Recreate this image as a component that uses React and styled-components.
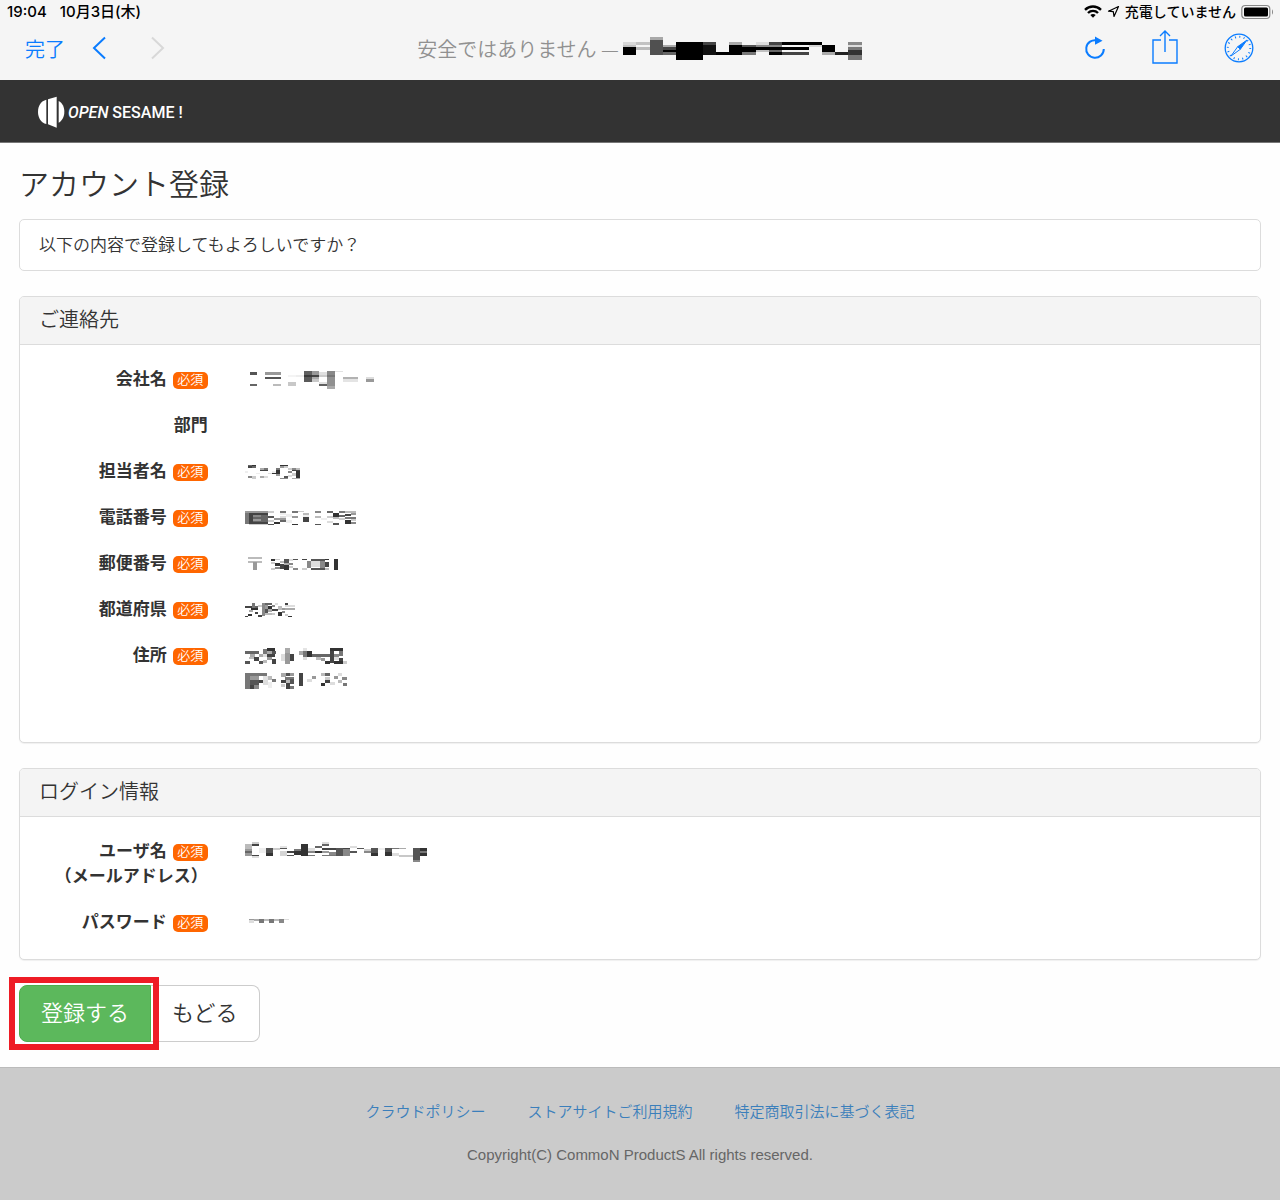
import styled, { createGlobalStyle, ThemeProvider } from 'styled-components';

const theme = {
  colors: {
    text: '#333',
    border: '#dcdcdc',
    panel: '#f4f4f4',
    ios: '#0a7cff',
    link: '#3b7fbb',
    required: '#ff6600',
    success: '#5cb85c',
    highlight: '#ee1c25',
  },
};

// each cell is [x, y, width, height, shade], three units to a pixel
const masks = {
  site: {
    box: [675, 42, 717, 69],
    cells: [
      [675, 57, 39, 9, '#d8d8d8'], [675, 66, 39, 6, '#c0c0c0'], [675, 72, 39, 24, '#000'],
      [714, 57, 42, 9, '#c2c2c2'], [714, 72, 42, 9, '#bbb'],
      [756, 42, 39, 9, '#a8a8a8'], [756, 51, 39, 45, '#505050'],
      [795, 66, 39, 6, '#aaa'], [795, 72, 39, 9, '#444'], [795, 81, 39, 6, '#000'], [795, 87, 39, 9, '#666'],
      [834, 57, 81, 54, '#000'],
      [915, 57, 38, 9, '#444'], [915, 66, 38, 30, '#111'],
      [953, 87, 79, 9, '#000'],
      [993, 57, 39, 9, '#aaa'], [993, 66, 39, 21, '#000'],
      [1032, 66, 42, 6, '#555'], [1032, 72, 42, 15, '#000'], [1032, 87, 42, 9, '#777'],
      [1074, 57, 39, 9, '#ddd'], [1074, 66, 39, 6, '#888'], [1074, 72, 39, 9, '#000'], [1074, 81, 39, 6, '#c0c0c0'],
      [1113, 57, 39, 9, '#444'], [1113, 66, 39, 6, '#888'], [1113, 72, 39, 9, '#000'], [1113, 81, 39, 6, '#666'], [1113, 87, 39, 9, '#000'],
      [1152, 57, 120, 9, '#000'], [1152, 72, 81, 9, '#000'], [1152, 87, 81, 9, '#444'],
      [1233, 66, 39, 6, '#d5d5d5'],
      [1272, 66, 39, 21, '#000'], [1272, 87, 39, 9, '#aaa'],
      [1311, 87, 39, 9, '#222'],
      [1350, 57, 42, 9, '#888'], [1350, 72, 42, 9, '#777'], [1350, 66, 42, 6, '#ddd'], [1350, 81, 42, 15, '#333'], [1350, 96, 42, 15, '#777'],
    ],
  },
  company: {
    box: [45, 33, 387, 54],
    cells: [
      [60, 36, 21, 9, '#555'], [60, 72, 21, 6, '#666'],
      [105, 36, 48, 9, '#999'], [105, 51, 48, 6, '#555'], [129, 72, 24, 6, '#bbb'],
      [174, 45, 24, 6, '#f4f4f4'], [198, 45, 24, 6, '#eee'], [174, 66, 24, 12, '#c8c8c8'],
      [222, 33, 24, 12, '#606060'], [222, 45, 24, 6, '#3a3a3a'], [222, 51, 24, 15, '#5a5a5a'],
      [246, 33, 21, 12, '#999'], [246, 45, 21, 6, '#444'], [246, 51, 21, 6, '#aaa'], [246, 57, 21, 9, '#c8c8c8'],
      [267, 36, 24, 9, '#e0e0e0'], [267, 45, 24, 6, '#ccc'], [267, 66, 24, 6, '#e2e2e2'], [267, 72, 24, 6, '#606060'],
      [291, 33, 24, 12, '#888'], [291, 45, 24, 6, '#777'], [291, 51, 24, 27, '#909090'], [291, 78, 24, 9, '#aaa'],
      [315, 33, 24, 3, '#e2e2e2'],
      [339, 51, 45, 6, '#b2b2b2'], [339, 57, 45, 9, '#e4e4e4'],
      [408, 51, 24, 6, '#ddd'], [408, 57, 24, 9, '#999'],
    ],
  },
  contact: {
    box: [45, 315, 165, 42],
    cells: [
      [54, 315, 24, 9, '#666'], [66, 315, 12, 3, '#333'], [54, 318, 12, 6, '#444'],
      [42, 333, 12, 6, '#eee'], [54, 348, 12, 6, '#888'], [66, 348, 12, 9, '#ccc'],
      [90, 324, 12, 6, '#aaa'], [102, 324, 12, 6, '#777'], [90, 330, 24, 3, '#444'],
      [78, 339, 12, 3, '#eee'], [90, 348, 12, 6, '#aaa'], [102, 348, 12, 6, '#ddd'],
      [114, 339, 12, 3, '#ddd'], [126, 333, 12, 6, '#eee'], [126, 339, 12, 3, '#333'],
      [138, 324, 12, 6, '#777'], [138, 330, 12, 12, '#333'], [138, 342, 12, 6, '#999'],
      [150, 315, 24, 3, '#333'], [150, 318, 12, 6, '#999'], [162, 318, 12, 6, '#ccc'],
      [150, 354, 24, 3, '#888'], [162, 348, 12, 6, '#555'],
      [174, 324, 12, 6, '#ccc'], [174, 333, 12, 6, '#888'], [174, 345, 12, 6, '#ddd'],
      [186, 324, 12, 6, '#888'], [186, 330, 24, 3, '#444'], [186, 339, 12, 9, '#ccc'],
      [198, 324, 12, 6, '#bbb'], [198, 333, 12, 21, '#333'], [186, 354, 24, 3, '#aaa'],
    ],
  },
  phone: {
    box: [45, 33, 333, 42],
    cells: [
      [45, 33, 69, 6, '#999'], [45, 39, 12, 33, '#777'], [57, 39, 12, 33, '#444'], [69, 39, 45, 6, '#444'],
      [69, 45, 24, 6, '#888'], [93, 45, 21, 6, '#666'], [69, 51, 45, 15, '#666'], [69, 57, 24, 6, '#999'], [69, 66, 45, 6, '#444'],
      [57, 72, 57, 3, '#ccc'],
      [114, 33, 18, 6, '#ccc'], [114, 48, 18, 6, '#555'], [132, 54, 36, 6, '#999'], [114, 60, 18, 6, '#ccc'], [132, 66, 18, 6, '#333'], [114, 72, 18, 3, '#555'],
      [150, 33, 18, 6, '#777'], [150, 39, 18, 6, '#eee'], [150, 48, 18, 6, '#ddd'], [150, 60, 18, 6, '#666'],
      [186, 33, 18, 6, '#777'], [204, 33, 18, 3, '#ccc'], [168, 42, 18, 9, '#eee'], [186, 48, 18, 6, '#999'], [168, 60, 18, 9, '#eee'], [186, 72, 18, 3, '#333'],
      [219, 39, 18, 6, '#bbb'], [219, 51, 18, 15, '#444'], [219, 45, 18, 6, '#eee'],
      [255, 33, 18, 6, '#888'], [255, 48, 18, 6, '#bbb'], [273, 54, 18, 6, '#eee'], [255, 72, 18, 3, '#555'],
      [291, 33, 18, 6, '#666'], [309, 39, 18, 12, '#333'], [291, 48, 18, 6, '#ccc'], [309, 51, 18, 6, '#bbb'], [291, 63, 18, 6, '#ddd'], [309, 69, 18, 6, '#555'],
      [327, 33, 18, 6, '#777'], [345, 33, 33, 6, '#bbb'], [327, 45, 18, 6, '#666'], [345, 42, 18, 6, '#444'], [363, 39, 15, 6, '#999'], [345, 51, 33, 6, '#777'],
      [345, 60, 18, 12, '#333'], [363, 57, 15, 6, '#ccc'], [327, 54, 18, 6, '#ccc'], [363, 66, 15, 6, '#888'],
    ],
  },
  postcode: {
    box: [45, 168, 279, 39],
    cells: [
      [54, 168, 42, 6, '#bbb'], [54, 180, 42, 6, '#bbb'], [69, 183, 12, 24, '#999'],
      [123, 174, 12, 6, '#333'], [135, 174, 15, 3, '#ccc'], [123, 183, 12, 6, '#ccc'], [135, 186, 15, 9, '#333'], [123, 201, 12, 6, '#ccc'], [135, 198, 15, 6, '#888'],
      [150, 180, 12, 6, '#bbb'], [150, 189, 12, 15, '#444'], [162, 174, 15, 12, '#555'], [162, 186, 15, 6, '#aaa'], [162, 192, 15, 15, '#333'],
      [177, 174, 12, 6, '#ddd'], [189, 174, 15, 3, '#555'], [177, 186, 12, 6, '#888'], [177, 195, 12, 6, '#ccc'], [189, 201, 15, 6, '#888'],
      [216, 174, 15, 3, '#444'], [216, 201, 15, 6, '#ccc'], [231, 180, 12, 21, '#888'],
      [243, 174, 42, 6, '#555'], [243, 180, 27, 18, '#ddd'], [243, 201, 42, 6, '#555'], [270, 180, 15, 21, '#888'], [285, 174, 12, 3, '#333'], [285, 183, 12, 15, '#444'], [285, 201, 12, 6, '#bbb'],
      [312, 174, 12, 33, '#333'],
    ],
  },
  prefecture: {
    box: [45, 312, 150, 42],
    cells: [
      [66, 312, 9, 15, '#777'], [45, 321, 21, 6, '#444'], [75, 321, 9, 6, '#666'], [84, 318, 12, 6, '#ccc'],
      [63, 327, 21, 6, '#333'], [57, 333, 12, 6, '#aaa'], [54, 345, 12, 6, '#333'], [45, 351, 9, 3, '#444'], [75, 339, 9, 6, '#444'], [84, 348, 12, 6, '#444'],
      [96, 312, 9, 39, '#888'], [105, 312, 21, 6, '#666'], [105, 318, 9, 12, '#999'], [114, 321, 12, 9, '#333'], [105, 330, 9, 12, '#555'], [114, 330, 12, 9, '#aaa'], [105, 342, 21, 6, '#bbb'],
      [126, 318, 9, 6, '#888'], [135, 312, 9, 6, '#ddd'], [126, 330, 18, 6, '#444'], [126, 342, 9, 6, '#ccc'],
      [144, 321, 12, 12, '#bbb'], [156, 327, 9, 6, '#999'], [144, 339, 12, 12, '#333'], [156, 336, 9, 6, '#888'],
      [165, 312, 9, 6, '#444'], [165, 318, 30, 6, '#ddd'], [165, 327, 30, 6, '#aaa'], [165, 345, 9, 6, '#ccc'], [174, 351, 12, 3, '#333'],
    ],
  },
  city: {
    box: [45, 444, 306, 48],
    cells: [
      [45, 453, 42, 9, '#666'], [60, 462, 15, 9, '#aaa'], [72, 471, 15, 12, '#444'], [57, 471, 15, 6, '#bbb'], [45, 483, 15, 9, '#555'], [87, 462, 12, 9, '#aaa'], [87, 483, 12, 9, '#555'],
      [99, 447, 12, 15, '#777'], [111, 444, 24, 9, '#333'], [111, 453, 15, 9, '#aaa'], [126, 453, 12, 9, '#555'], [99, 462, 12, 9, '#ddd'], [111, 462, 24, 9, '#444'], [111, 471, 15, 9, '#999'], [99, 480, 12, 9, '#bbb'], [126, 477, 12, 15, '#444'],
      [165, 444, 15, 15, '#aaa'], [153, 462, 12, 21, '#ddd'], [165, 459, 15, 33, '#999'], [180, 462, 12, 21, '#444'],
      [207, 453, 12, 12, '#aaa'], [219, 444, 12, 9, '#e4e4e4'], [219, 453, 12, 18, '#777'], [231, 453, 15, 18, '#333'], [219, 471, 12, 9, '#ddd'],
      [246, 462, 54, 9, '#666'], [258, 471, 15, 9, '#bbb'], [273, 474, 12, 9, '#999'], [285, 483, 15, 9, '#333'],
      [300, 444, 39, 9, '#333'], [300, 453, 12, 36, '#444'], [312, 462, 15, 9, '#888'], [327, 453, 12, 15, '#777'], [312, 471, 15, 9, '#ddd'], [327, 474, 12, 9, '#444'], [312, 483, 27, 9, '#333'], [339, 483, 12, 9, '#ccc'],
    ],
  },
  street: {
    box: [45, 519, 306, 48],
    cells: [
      [45, 519, 66, 9, '#777'], [45, 528, 15, 39, '#777'], [60, 528, 27, 12, '#999'], [60, 540, 27, 15, '#555'], [72, 555, 15, 12, '#888'], [60, 555, 12, 12, '#444'],
      [99, 528, 15, 12, '#e2e2e2'], [87, 540, 12, 9, '#444'], [114, 528, 12, 12, '#bbb'], [126, 537, 12, 9, '#777'], [99, 540, 15, 15, '#ddd'], [114, 546, 12, 18, '#eee'],
      [153, 519, 15, 12, '#aaa'], [168, 519, 12, 9, '#555'], [180, 519, 12, 9, '#999'], [165, 531, 27, 9, '#777'], [153, 540, 15, 9, '#444'], [168, 540, 12, 9, '#bbb'], [180, 537, 12, 15, '#555'], [153, 552, 12, 9, '#ccc'], [168, 549, 12, 18, '#444'], [180, 558, 12, 9, '#777'],
      [207, 519, 12, 39, '#444'], [231, 537, 15, 9, '#ddd'], [246, 528, 12, 9, '#999'],
      [273, 519, 12, 9, '#bbb'], [285, 519, 15, 9, '#666'], [285, 531, 15, 9, '#ccc'], [285, 540, 15, 9, '#444'], [273, 549, 12, 9, '#333'], [300, 546, 15, 9, '#ddd'],
      [324, 519, 12, 9, '#ddd'], [312, 528, 12, 9, '#999'], [336, 531, 15, 9, '#888'], [324, 540, 12, 9, '#bbb'], [339, 549, 12, 9, '#777'],
    ],
  },
  email: {
    box: [45, 36, 546, 60],
    cells: [
      [45, 42, 21, 15, '#bbb'], [66, 36, 21, 6, '#ccc'], [66, 42, 21, 6, '#444'], [45, 57, 21, 6, '#999'], [45, 63, 21, 6, '#666'], [45, 69, 21, 9, '#999'], [66, 75, 21, 3, '#444'], [66, 78, 21, 5, '#ddd'],
      [87, 54, 21, 15, '#eee'], [108, 54, 21, 15, '#555'], [108, 69, 21, 9, '#333'], [129, 54, 21, 6, '#ccc'],
      [150, 48, 21, 6, '#e4e4e4'], [150, 54, 21, 3, '#555'], [150, 63, 21, 15, '#d4d4d4'], [171, 63, 21, 6, '#444'], [171, 75, 21, 3, '#555'],
      [192, 57, 21, 6, '#777'], [192, 63, 21, 12, '#333'], [213, 42, 21, 36, '#333'],
      [234, 54, 21, 9, '#ddd'], [234, 63, 21, 6, '#888'], [255, 48, 21, 6, '#666'], [255, 63, 21, 6, '#333'], [234, 75, 21, 3, '#777'],
      [276, 36, 21, 6, '#ddd'], [276, 42, 21, 6, '#666'], [276, 54, 42, 6, '#444'], [276, 63, 21, 6, '#999'], [297, 66, 21, 9, '#888'], [276, 75, 42, 3, '#777'],
      [318, 54, 21, 24, '#555'], [339, 57, 21, 21, '#888'], [339, 54, 21, 3, '#444'], [360, 48, 21, 6, '#ddd'], [360, 63, 21, 6, '#555'],
      [381, 54, 21, 3, '#555'], [402, 57, 21, 6, '#ccc'], [402, 63, 21, 6, '#888'],
      [423, 54, 21, 15, '#555'], [423, 69, 21, 9, '#333'], [444, 54, 21, 6, '#eee'],
      [465, 54, 21, 12, '#555'], [465, 66, 21, 12, '#333'], [486, 54, 21, 3, '#777'], [486, 69, 21, 9, '#ddd'], [507, 54, 21, 3, '#aaa'], [507, 75, 42, 6, '#c8c8c8'],
      [549, 54, 21, 36, '#555'], [549, 90, 21, 6, '#888'], [570, 54, 21, 9, '#333'], [570, 63, 21, 6, '#777'], [570, 69, 21, 9, '#333'],
    ],
  },
  password: {
    box: [45, 258, 132, 30],
    cells: [
      [57, 261, 15, 3, '#999'], [57, 264, 15, 8, '#ddd'], [72, 261, 15, 6, '#aaa'], [87, 261, 15, 11, '#777'],
      [102, 261, 15, 6, '#bbb'], [117, 261, 15, 11, '#777'], [132, 261, 15, 6, '#bbb'], [147, 261, 15, 11, '#888'], [162, 261, 15, 4, '#ddd'],
    ],
  },
};

const contactRows = [
  { label: '会社名', required: true, lines: ['company'] },
  { label: '部門', lines: [''] },
  { label: '担当者名', required: true, lines: ['contact'] },
  { label: '電話番号', required: true, lines: ['phone'] },
  { label: '郵便番号', required: true, lines: ['postcode'] },
  { label: '都道府県', required: true, lines: ['prefecture'] },
  { label: '住所', required: true, lines: ['city', 'street', ''] },
];

const loginRows = [
  { label: 'ユーザ名', note: '（メールアドレス）', required: true, lines: ['email'] },
  { label: 'パスワード', required: true, lines: ['password'] },
];

function Mask({ name }) {
  const { box, cells } = masks[name];
  return (
    <MaskSvg
      width={Math.round(box[2] / 3)}
      height={Math.round(box[3] / 3)}
      viewBox={box.join(' ')}
      shapeRendering="crispEdges"
      aria-hidden="true"
    >
      {cells.map(([x, y, width, height, fill], i) => (
        <rect key={i} x={x} y={y} width={width} height={height} fill={fill} />
      ))}
    </MaskSvg>
  );
}

function Chevron({ flip }) {
  return (
    <svg width="14" height="24" viewBox="0 0 14 24" fill="none" stroke="currentColor" strokeWidth="2">
      <path d={flip ? 'M1 1.5 12 12 1 22.5' : 'M13 1.5 2 12 13 22.5'} />
    </svg>
  );
}

function StatusBar() {
  return (
    <StatusWrapper>
      <Clock>
        <span>19:04</span>
        <span>10月3日(木)</span>
      </Clock>
      <StatusGroup>
        <svg width="18" height="13" viewBox="0 0 18 13" fill="none" stroke="#000" strokeWidth="2.4">
          <path d="M1 4.8C5.5.4 12.5.4 17 4.8" />
          <path d="M4 8C6.8 5.2 11.2 5.2 14 8" />
          <path d="M9 12.8 6.3 10C7.8 8.6 10.2 8.6 11.7 10Z" fill="#000" stroke="none" />
        </svg>
        <svg width="13" height="13" viewBox="0 0 13 13" fill="none" stroke="#000" strokeWidth="1.2" strokeLinejoin="round">
          <path d="M11.5 1.5 1.5 6.2 6.3 6.7 7 11.5Z" />
        </svg>
        <span>充電していません</span>
        <svg width="33" height="16" viewBox="0 0 33 16">
          <rect x=".8" y="1.5" width="28" height="13" rx="3.5" fill="none" stroke="#888" strokeWidth="1.2" />
          <rect x="3" y="3.5" width="24" height="9" rx="1.5" />
          <path d="M31 5.5V10.5C32.3 10 32.3 6 31 5.5Z" fill="#888" />
        </svg>
      </StatusGroup>
    </StatusWrapper>
  );
}

function BrowserBar() {
  return (
    <BrowserWrapper>
      <NavGroup>
        <DoneButton type="button">完了</DoneButton>
        <IconButton type="button" aria-label="戻る">
          <Chevron />
        </IconButton>
        <IconButton type="button" aria-label="進む" disabled>
          <Chevron flip />
        </IconButton>
      </NavGroup>
      <PageAddress>
        安全ではありません —<Mask name="site" />
      </PageAddress>
      <ToolGroup>
        <IconButton type="button" aria-label="再読み込み">
          <svg width="22" height="24" viewBox="0 0 22 24" fill="none" stroke="currentColor" strokeWidth="2">
            <path d="M13 4.4A8.800 8.800 0 1 0 19.800 13" />
            <path d="M11 .5 18.5 4.700 11 8.800Z" fill="currentColor" stroke="none" />
          </svg>
        </IconButton>
        <IconButton type="button" aria-label="共有">
          <svg width="26" height="38" viewBox="0 0 26 38" fill="none" stroke="currentColor" strokeWidth="1.4">
            <path d="M9 11H1V34H25V11H17M13 23V2M8 7 13 2 18 7" />
          </svg>
        </IconButton>
        <IconButton type="button" aria-label="Safari">
          <svg width="30" height="30" viewBox="0 0 30 30" fill="none" stroke="currentColor">
            <circle cx="15" cy="15" r="13.8" strokeWidth="1.3" />
            <circle cx="15" cy="15" r="11.2" strokeWidth="2" strokeDasharray="1 3.398" />
            <path d="M23 7 16.3 16.3 13.7 13.7Z" fill="currentColor" />
            <path d="M7 23 13.7 13.7 16.3 16.3Z" fill="#f5f5f5" />
          </svg>
        </IconButton>
      </ToolGroup>
    </BrowserWrapper>
  );
}

function FormRow({ row }) {
  return (
    <RowWrapper>
      <RowLabel>
        <LabelLine>
          {row.label}
          {row.required ? <Badge>必須</Badge> : null}
        </LabelLine>
        {row.note ? <LabelLine>{row.note}</LabelLine> : null}
      </RowLabel>
      <RowValue>
        {row.lines.map((name, i) => (
          <ValueLine key={i}>{name ? <Mask name={name} /> : null}</ValueLine>
        ))}
      </RowValue>
    </RowWrapper>
  );
}

function Panel({ title, rows }) {
  return (
    <PanelWrapper>
      <PanelTitle>{title}</PanelTitle>
      <PanelBody>
        {rows.map((row) => (
          <FormRow key={row.label} row={row} />
        ))}
      </PanelBody>
    </PanelWrapper>
  );
}

function App() {
  return (
    <ThemeProvider theme={theme}>
      <GlobalStyle />
      <Chrome>
        <StatusBar />
        <BrowserBar />
      </Chrome>
      <SiteHeader>
        <Logo href="#">
          <svg width="27" height="32" viewBox="115 289 81 96" fill="#fff" aria-hidden="true">
            <path d="M140 300V373C124 369 115 354 115 336S124 304 140 300Z" />
            <path d="M145 299 171 291V384L145 374Z" />
            <path d="M177 304C188 310 194 322 194 336S188 363 177 369Z" />
          </svg>
          <span>
            <em>OPEN</em> SESAME !
          </span>
        </Logo>
      </SiteHeader>
      <Main>
        <Title>アカウント登録</Title>
        <Message>以下の内容で登録してもよろしいですか？</Message>
        <Panel title="ご連絡先" rows={contactRows} />
        <Panel title="ログイン情報" rows={loginRows} />
        <ButtonGroup>
          <SubmitButton type="submit">登録する</SubmitButton>
          <BackButton type="button">もどる</BackButton>
        </ButtonGroup>
      </Main>
      <Footer>
        <FooterLinks>
          <a href="#">クラウドポリシー</a>
          <a href="#">ストアサイトご利用規約</a>
          <a href="#">特定商取引法に基づく表記</a>
        </FooterLinks>
        <Copyright>Copyright(C) CommoN ProductS All rights reserved.</Copyright>
      </Footer>
    </ThemeProvider>
  );
}

export default App;

const GlobalStyle = createGlobalStyle`
  * {
    box-sizing: border-box;
  }
  body {
    background-color: #fefefe;
    color: ${({ theme }) => theme.colors.text};
    font-family: "Liberation Sans", "Noto Sans CJK JP", sans-serif;
    font-size: 17px;
    font-weight: 350;
    line-height: 25px;
    margin: 0;
  }
  #root {
    display: flex;
    flex-direction: column;
    min-height: 100vh;
  }
  button {
    font-family: inherit;
    font-weight: inherit;
  }
`;
const MaskSvg = styled.svg`
  display: block;
  flex: none;
`;
const Chrome = styled.div`
  background-color: #f5f5f5;
  padding-bottom: 7px;
`;
const StatusWrapper = styled.div`
  align-items: center;
  color: #000;
  display: flex;
  font-family: Inter, "Noto Sans CJK JP", sans-serif;
  font-size: 14px;
  font-weight: 500;
  height: 23px;
  justify-content: space-between;
  padding: 0 6px 0 7px;
`;
const StatusGroup = styled.div`
  align-items: center;
  display: flex;
  gap: 5px;
`;
const Clock = styled(StatusGroup)`
  font-size: 15px;
  gap: 13px;
`;
const BrowserWrapper = styled.nav`
  align-items: center;
  display: grid;
  grid-template-columns: 1fr auto 1fr;
  height: 50px;
  padding: 0 26px 0 25px;
`;
const NavGroup = styled.div`
  align-items: center;
  display: flex;
  gap: 45px;
`;
const ToolGroup = styled(NavGroup)`
  gap: 46px;
  justify-content: flex-end;
`;
const IconButton = styled.button`
  background: none;
  border: none;
  color: ${({ theme }) => theme.colors.ios};
  cursor: pointer;
  display: flex;
  padding: 0;

  &:disabled {
    color: #d8d8d8;
  }
`;
const DoneButton = styled(IconButton)`
  font-size: 20px;
  margin-right: -18px;
`;
const PageAddress = styled.div`
  align-items: center;
  color: #909090;
  display: flex;
  font-family: "Noto Sans CJK JP", sans-serif;
  font-size: 20px;
  gap: 4px;
`;
const SiteHeader = styled.header`
  background-color: #333;
  border-bottom: 1px solid #777;
  padding: 16px 38px 14px;
`;
const Logo = styled.a`
  align-items: center;
  color: #fff;
  display: inline-flex;
  font-family: Roboto, sans-serif;
  font-size: 16px;
  font-weight: 500;
  gap: 3px;
  height: 32px;
  text-decoration: none;
  vertical-align: top;
`;
const Main = styled.main`
  padding: 22px 19px 25px;
`;
const Title = styled.h1`
  font-size: 30px;
  font-weight: 350;
  line-height: 40px;
  margin: 0 0 14px;
`;
const Message = styled.p`
  background-color: #fff;
  border: 1px solid ${({ theme }) => theme.colors.border};
  border-radius: 5px;
  margin: 0 0 25px;
  padding: 13px 19px 12px;
`;
const PanelWrapper = styled.section`
  background-color: #fff;
  border: 1px solid ${({ theme }) => theme.colors.border};
  border-radius: 5px;
  box-shadow: 0 1px 1px rgba(0, 0, 0, 0.06);
  margin-bottom: 25px;
`;
const PanelTitle = styled.h2`
  background-color: ${({ theme }) => theme.colors.panel};
  border-bottom: 1px solid ${({ theme }) => theme.colors.border};
  border-radius: 4px 4px 0 0;
  font-size: 20px;
  font-weight: 350;
  line-height: 23px;
  margin: 0;
  padding: 12px 19px;
`;
const PanelBody = styled.dl`
  display: flex;
  flex-direction: column;
  gap: 21px;
  margin: 0;
  padding: 22px 0 24px;
`;
const RowWrapper = styled.div`
  display: grid;
  grid-template-columns: 1fr 5fr;
`;
const RowLabel = styled.dt`
  font-weight: 700;
  padding-right: 19px;
`;
const LabelLine = styled.div`
  align-items: center;
  display: flex;
  gap: 6px;
  justify-content: flex-end;
  white-space: nowrap;
`;
const Badge = styled.span`
  background-color: ${({ theme }) => theme.colors.required};
  border-radius: 5px;
  color: #fff;
  font-size: 13px;
  font-weight: 350;
  height: 17px;
  line-height: 15px;
  margin-top: 2px;
  text-align: center;
  width: 35px;
`;
const RowValue = styled.dd`
  margin: 0;
  padding-left: 18px;
`;
const ValueLine = styled.div`
  align-items: center;
  display: flex;
  height: 25px;
`;
const ButtonGroup = styled.div`
  display: flex;
`;
const Button = styled.button`
  border: 1px solid #ccc;
  cursor: pointer;
  font-size: 22px;
  line-height: 31px;
  padding: 12px 21px;
`;
const SubmitButton = styled(Button)`
  background-color: ${({ theme }) => theme.colors.success};
  border-color: #4cae4c;
  border-radius: 8px 0 0 8px;
  color: #fff;
  position: relative;

  &::after {
    border: 6px solid ${({ theme }) => theme.colors.highlight};
    content: '';
    inset: -9px -9px -9px -11px;
    position: absolute;
  }
`;
const BackButton = styled(Button)`
  background-color: #fff;
  border-left: none;
  border-radius: 0 8px 8px 0;
  color: ${({ theme }) => theme.colors.text};
`;
const Footer = styled.footer`
  background-color: #cbcbcb;
  border-top: 1px solid #bbb;
  flex: 1;
  font-size: 15px;
  padding: 31px 20px;
  text-align: center;
`;
const FooterLinks = styled.div`
  display: flex;
  gap: 42px;
  justify-content: center;

  a {
    color: ${({ theme }) => theme.colors.link};
    text-decoration: none;
  }
`;
const Copyright = styled.p`
  color: #666;
  font-weight: 400;
  margin: 18px 0 0;
`;
